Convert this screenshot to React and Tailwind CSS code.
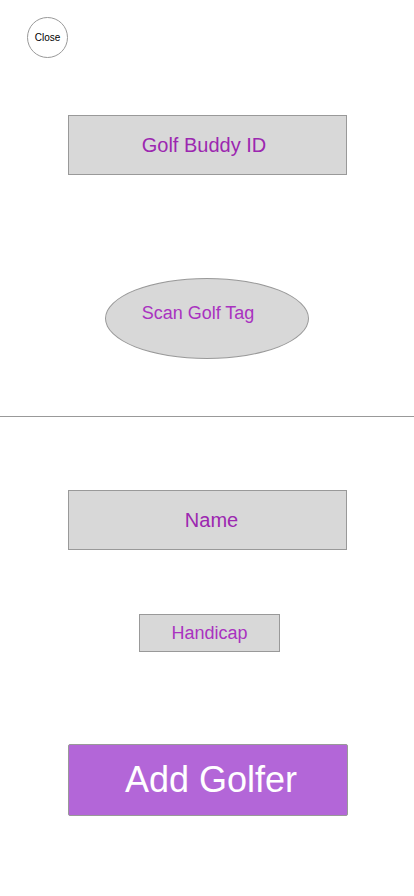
import React from 'react';

export default function App() {
  return (
    <div className="w-[414px] min-h-[896px] bg-white flex flex-col font-['Liberation_Sans',Arial,sans-serif]">
      <div className="pt-[17px] pl-[27px]">
        <button className="w-[41px] h-[41px] rounded-full border border-[#999] bg-white flex items-center justify-center text-[10px] text-black">
          Close
        </button>
      </div>

      <div className="mt-[57px] ml-[68px] w-[279px] h-[60px] bg-[#d8d8d8] border border-[#999] flex items-center justify-center pr-[7px] text-[20px] text-[#9c27b0]">
        Golf Buddy ID
      </div>

      <div className="mt-[103px] ml-[105px] w-[204px] h-[81px] rounded-[50%] bg-[#d8d8d8] border border-[#999] flex items-center justify-center pr-[18px] pb-[10px] text-[18px] text-[#a932c0]">
        Scan Golf Tag
      </div>

      <div className="mt-[57px] h-px bg-[#999]"></div>

      <div className="mt-[73px] ml-[68px] w-[279px] h-[60px] bg-[#d8d8d8] border border-[#999] flex items-center justify-center pl-[8px] text-[20px] text-[#9c27b0]">
        Name
      </div>

      <div className="mt-[64px] ml-[139px] w-[141px] h-[38px] bg-[#d8d8d8] border border-[#999] flex items-center justify-center text-[18px] text-[#a932c0]">
        Handicap
      </div>

      <button className="mt-[92px] ml-[68px] w-[280px] h-[72px] rounded-[2px] bg-[#b366d8] border border-[#999] flex items-center justify-center pl-[6px] text-[36px] text-white">
        Add Golfer
      </button>
    </div>
  );
}
